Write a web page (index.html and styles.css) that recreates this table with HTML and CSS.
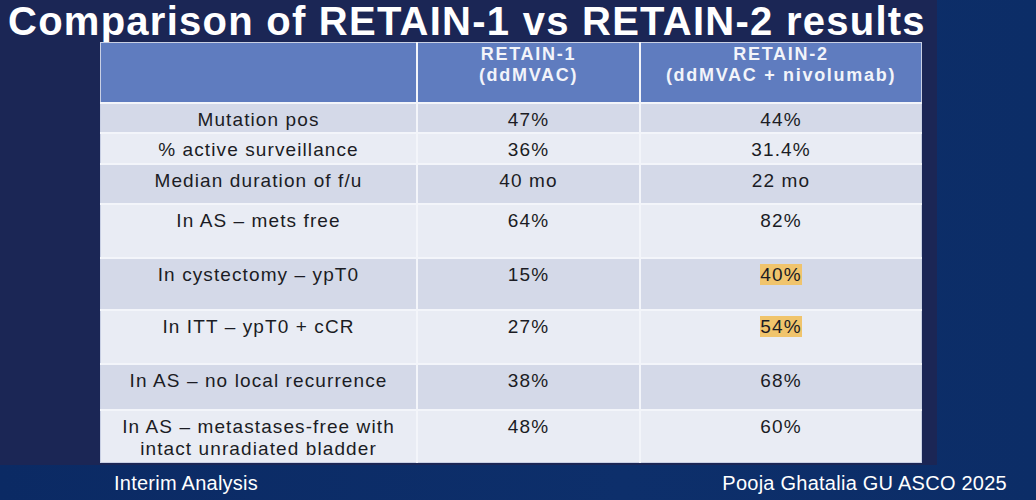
FILE: index.html
```html
<!DOCTYPE html>
<html>
<head>
<meta charset="utf-8">
<link rel="stylesheet" href="styles.css">
</head>
<body>
<div class="screen">
  <div class="slide">
    <h1 class="title">Comparison of RETAIN-1 vs RETAIN-2 results</h1>
    <table class="results">
      <tr class="head">
        <th class="c1"></th>
        <th class="c2">RETAIN-1<br>(ddMVAC)</th>
        <th class="c3">RETAIN-2<br>(ddMVAC + nivolumab)</th>
      </tr>
      <tr class="dark r1"><td>Mutation pos</td><td>47%</td><td>44%</td></tr>
      <tr class="light r2"><td>% active surveillance</td><td>36%</td><td>31.4%</td></tr>
      <tr class="dark r3"><td>Median duration of f/u</td><td>40 mo</td><td>22 mo</td></tr>
      <tr class="light r4"><td>In AS – mets free</td><td>64%</td><td>82%</td></tr>
      <tr class="dark r5"><td>In cystectomy – ypT0</td><td>15%</td><td><span class="mark">40%</span></td></tr>
      <tr class="light r6"><td>In ITT – ypT0 + cCR</td><td>27%</td><td><span class="mark">54%</span></td></tr>
      <tr class="dark r7"><td>In AS – no local recurrence</td><td>38%</td><td>68%</td></tr>
      <tr class="light r8"><td>In AS – metastases-free with<br>intact unradiated bladder</td><td>48%</td><td>60%</td></tr>
    </table>
  </div>
  <div class="footer">
    <span class="foot-left">Interim Analysis</span>
    <span class="foot-right">Pooja Ghatalia GU ASCO 2025</span>
  </div>
</div>
</body>
</html>
```
FILE: styles.css
```css
html, body {
  margin: 0;
  padding: 0;
}
body {
  background: #0c2c68;
  font-family: "Liberation Sans", Arial, sans-serif;
}
.screen {
  width: 1036px;
  height: 500px;
  overflow: hidden;
  background: linear-gradient(90deg, #0b2a64 0%, #0d2f6b 60%, #0c2d67 100%);
}
.slide {
  width: 937px;
  height: 465px;
  background: #1b2655;
  display: flex;
  flex-direction: column;
}
.title {
  margin: 0;
  padding-left: 8px;
  font-size: 40px;
  line-height: 42px;
  font-weight: bold;
  letter-spacing: 1.25px;
  color: #ffffff;
  white-space: nowrap;
}
.results {
  margin: 0 0 0 100px;
  width: 816px;
  border-collapse: collapse;
  border: 1px solid #c9d0e4;
  table-layout: fixed;
  color: #1b1c24;
  font-size: 19px;
  line-height: 22px;
  letter-spacing: 1.1px;
}
.results th, .results td {
  padding: 5px 0 0 0;
  text-align: center;
  vertical-align: top;
  border-left: 2px solid #f3f5fa;
  border-top: 2px solid #f3f5fa;
}
.results th:first-child, .results td:first-child {
  border-left: none;
}
.c1 { width: 315px; }
.c2 { width: 221px; }
.c3 { width: 280px; }
.head {
  height: 60px;
  background: #5f7cbf;
}
.head th {
  border-top: none;
  padding-top: 1px;
  color: #f2f4fa;
  font-size: 18px;
  line-height: 21px;
  letter-spacing: 1.7px;
  font-weight: bold;
}
.dark { background: #d4d9e8; }
.light { background: #e9ecf4; }
.r1 { height: 30px; }
.r2 { height: 31px; }
.r3 { height: 40px; }
.r4 { height: 54px; }
.r5 { height: 52px; }
.r6 { height: 54px; }
.r7 { height: 46px; }
.r8 { height: 53px; }
.mark {
  background: #f0c46c;
}
.footer {
  height: 35px;
  display: flex;
  justify-content: space-between;
  align-items: center;
  padding: 0 29px 0 114px;
  color: #ffffff;
  font-size: 20px;
  line-height: 24px;
  letter-spacing: 0.25px;
}
```
